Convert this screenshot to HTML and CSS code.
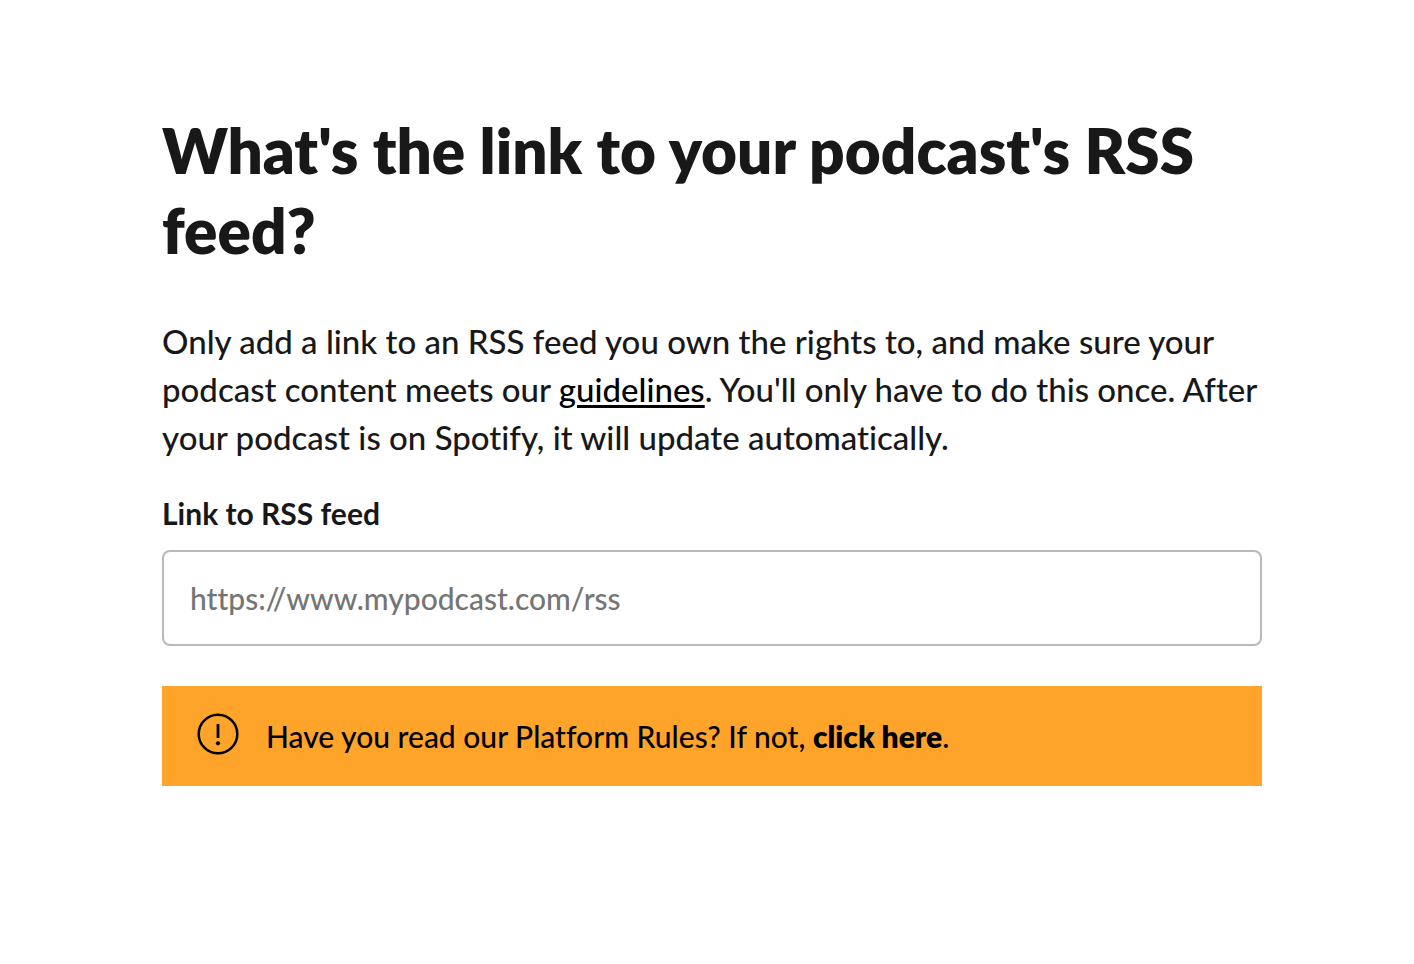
FILE: index.html
```html
<!DOCTYPE html>
<html lang="en">
<head>
<meta charset="utf-8">
<meta name="viewport" content="width=device-width, initial-scale=1">
<title>Add your podcast</title>
<link rel="stylesheet" href="styles.css">
</head>
<body>
<main class="page">
  <h1 class="title">What's the link to your podcast's RSS feed?</h1>
  <p class="intro">Only add a link to an RSS feed you own the rights to, and make sure your podcast content meets our <a class="intro-link" href="#guidelines">guidelines</a>. You'll only have to do this once. After your podcast is on Spotify, it will update automatically.</p>
  <form class="field">
    <label class="label" for="rss">Link to RSS feed</label>
    <input class="input" id="rss" type="url" placeholder="https://www.mypodcast.com/rss">
  </form>
  <aside class="notice">
    <svg class="notice-icon" viewBox="0 0 42 42" aria-hidden="true">
      <circle cx="21" cy="22" r="19.3" fill="none" stroke="currentColor" stroke-width="2.5"/>
      <path d="M19.6 12h2.8v14h-2.8z" fill="currentColor"/>
      <circle cx="21" cy="31.3" r="2.1" fill="currentColor"/>
    </svg>
    <p class="notice-text">Have you read our Platform Rules? If not, <a class="notice-link" href="#rules">click here</a>.</p>
  </aside>
</main>
</body>
</html>
```

FILE: styles.css
```css
* {
  box-sizing: border-box;
}

body {
  margin: 0;
  background: #fff;
  color: #181818;
  font-family: Lato, "Liberation Sans", sans-serif;
  font-weight: 500;
  font-variant-ligatures: none;
}

.page {
  max-width: 1424px;
  padding: 110px 152px 112px 162px;
}

.title {
  margin: 0 0 47px;
  font-size: 62px;
  line-height: 80px;
  font-weight: 800;
}

.intro {
  margin: 0 0 32px;
  font-size: 33px;
  line-height: 48px;
}

.intro-link {
  color: #000;
  text-decoration-thickness: 3px;
  text-underline-offset: 3px;
}

.field {
  display: flex;
  flex-direction: column;
  gap: 17px;
  margin-bottom: 40px;
}

.label {
  font-size: 30px;
  line-height: 40px;
  font-weight: 700;
}

.input {
  width: 100%;
  height: 96px;
  padding: 0 26px;
  border: 2px solid #b9b9b9;
  border-radius: 8px;
  background: #fff;
  color: #181818;
  font: inherit;
  font-size: 30px;
}

.input::placeholder {
  color: #757575;
}

.notice {
  display: flex;
  align-items: flex-start;
  gap: 27px;
  padding: 26px 35px;
  background: #ffa42b;
  color: #000;
}

.notice-icon {
  flex: none;
  width: 42px;
  height: 42px;
  overflow: visible;
}

.notice-text {
  margin: 0;
  font-size: 30px;
  line-height: 48px;
}

.notice-link {
  color: inherit;
  font-weight: 800;
  text-decoration: none;
}
```
